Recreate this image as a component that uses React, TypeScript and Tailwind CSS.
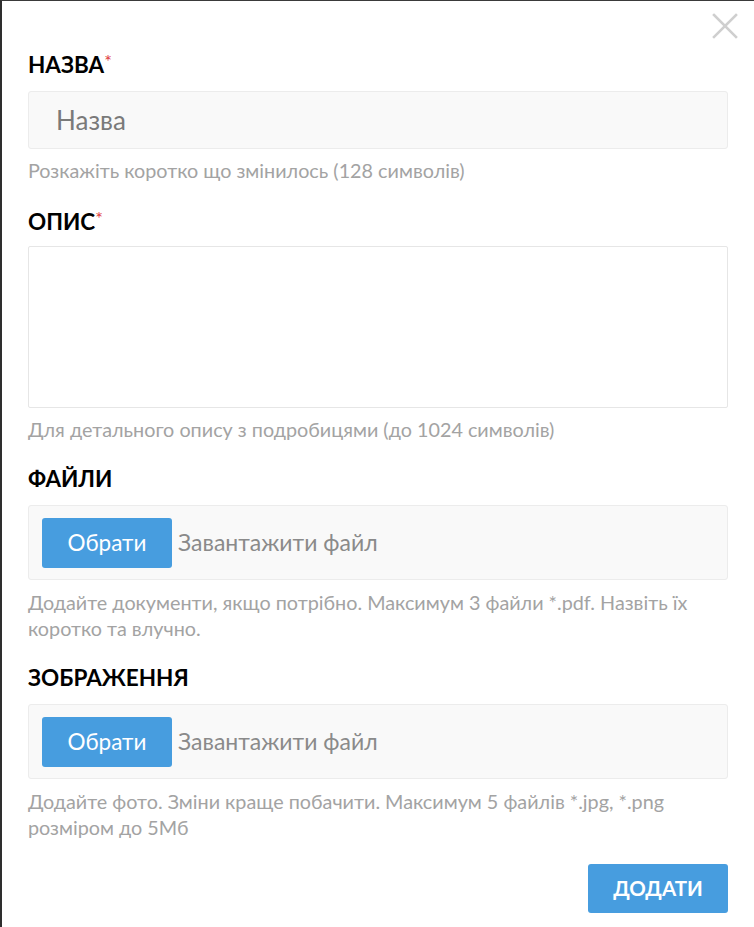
import React from 'react';

const font = { fontFamily: 'Lato, "Open Sans", sans-serif' };

function Label({ text, required }: { text: string; required?: boolean }) {
  return (
    <div className="text-[22.5px] font-bold leading-[26px] text-black uppercase">
      {text}
      {required && <span className="text-[#e0383e] text-[18px] leading-none align-top font-normal">*</span>}
    </div>
  );
}

function Hint({ children }: { children: React.ReactNode }) {
  return <p className="text-[19.8px] leading-[26px] text-[#a3a3a3]">{children}</p>;
}

function FileField() {
  return (
    <div className="h-[75px] bg-[#f9f9f9] border border-[#ececec] rounded-[3px] flex items-center px-[13px]">
      <button className="w-[130px] h-[50px] bg-[#479ddf] rounded-[3px] text-white text-[22.5px]">Обрати</button>
      <span className="ml-[6px] text-[23px] text-[#8a8a8a]">Завантажити файл</span>
    </div>
  );
}

export default function App() {
  return (
    <div
      className="w-[754px] h-[927px] bg-white border-t border-t-[#3a3a3a] border-l-2 border-l-[#2e2e2e] relative"
      style={font}
    >
      <button className="absolute right-[16px] top-[12px] w-[26px] h-[26px]">
        <svg viewBox="0 0 26 26" width="26" height="26" stroke="#cfcfcf" strokeWidth="2.6" strokeLinecap="square">
          <line x1="2" y1="2" x2="24" y2="24" />
          <line x1="24" y1="2" x2="2" y2="24" />
        </svg>
      </button>

      <div className="pl-[26px] pr-[26px] pt-[51px]">
        <Label text="Назва" required />
        <input
          className="mt-[13px] w-full h-[58px] bg-[#f9f9f9] border border-[#ececec] rounded-[3px] px-[27px] text-[26px] text-[#333] placeholder:text-[#7a7a7a] outline-none"
          placeholder="Назва"
        />
        <div className="mt-[8px]">
          <Hint>Розкажіть коротко що змінилось (128 символів)</Hint>
        </div>

        <div className="mt-[26px]">
          <Label text="Опис" required />
        </div>
        <textarea className="mt-[11px] block w-full h-[162px] bg-white border border-[#e6e6e6] rounded-[2px] resize-none outline-none" />
        <div className="mt-[8px]">
          <Hint>Для детального опису з подробицями (до 1024 символів)</Hint>
        </div>

        <div className="mt-[24px]">
          <Label text="Файли" />
        </div>
        <div className="mt-[13px]">
          <FileField />
        </div>
        <div className="mt-[9px]">
          <Hint>Додайте документи, якщо потрібно. Максимум 3 файли *.pdf. Назвіть їх коротко та влучно.</Hint>
        </div>

        <div className="mt-[24px]">
          <Label text="Зображення" />
        </div>
        <div className="mt-[13px]">
          <FileField />
        </div>
        <div className="mt-[9px]">
          <Hint>Додайте фото. Зміни краще побачити. Максимум 5 файлів *.jpg, *.png розміром до 5Мб</Hint>
        </div>

        <div className="mt-[24px] flex justify-end">
          <button className="w-[140px] h-[49px] bg-[#479ddf] rounded-[3px] text-white text-[20.5px] font-bold uppercase">
            Додати
          </button>
        </div>
      </div>
    </div>
  );
}
